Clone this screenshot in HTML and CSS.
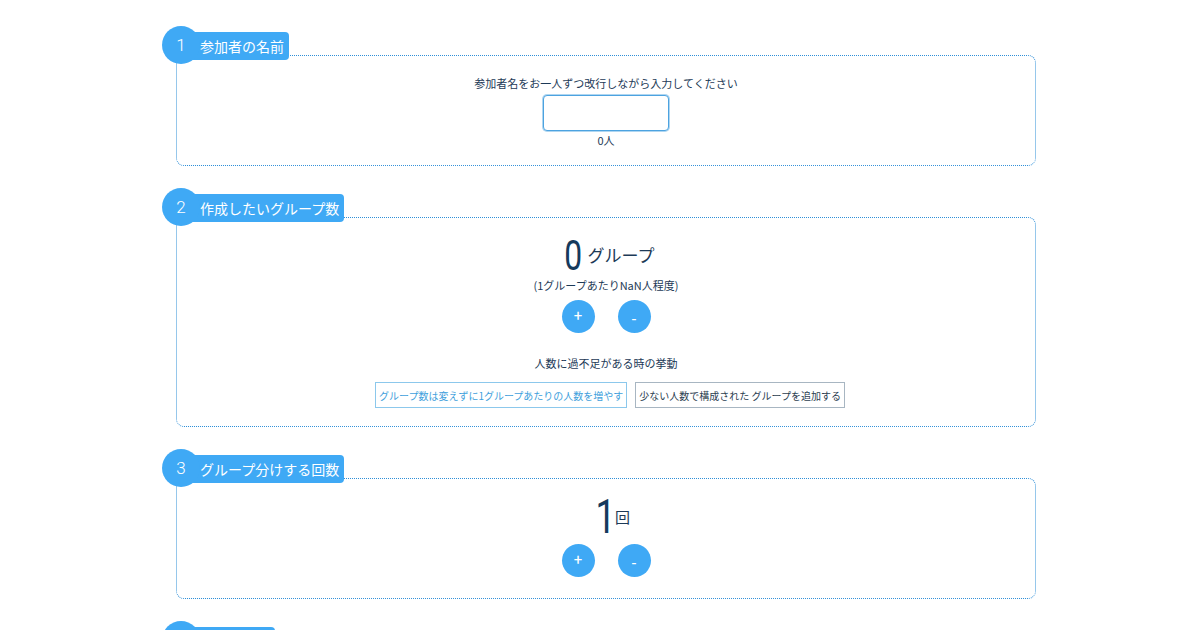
FILE: index.html
```html
<!DOCTYPE html>
<html lang="ja">
<head>
<meta charset="utf-8">
<title>グループ分け</title>
<link rel="stylesheet" href="styles.css">
</head>
<body>
<main class="wrap">
  <section class="section">
    <div class="heading"><span class="num">1</span><span class="label">参加者の名前</span></div>
    <div class="box box-names">
      <p class="hint">参加者名をお一人ずつ改行しながら入力してください</p>
      <textarea class="names"></textarea>
      <p class="count">0人</p>
    </div>
  </section>

  <section class="section">
    <div class="heading"><span class="num">2</span><span class="label">作成したいグループ数</span></div>
    <div class="box box-groups">
      <div class="big-row"><span class="big big-zero">0</span><span class="unit">グループ</span></div>
      <p class="sub">(1グループあたりNaN人程度)</p>
      <div class="steppers"><button class="step">+</button><button class="step minus">-</button></div>
      <p class="hint behavior">人数に過不足がある時の挙動</p>
      <div class="options">
        <button class="opt active">グループ数は変えずに1グループあたりの人数を増やす</button>
        <button class="opt">少ない人数で構成された グループを追加する</button>
      </div>
    </div>
  </section>

  <section class="section">
    <div class="heading"><span class="num">3</span><span class="label">グループ分けする回数</span></div>
    <div class="box box-rounds">
      <div class="big-row round-row"><span class="big big-one">1</span><span class="unit unit-small">回</span></div>
      <div class="steppers"><button class="step">+</button><button class="step minus">-</button></div>
    </div>
  </section>

  <section class="section">
    <div class="heading"><span class="num">4</span><span class="label">結果を見る</span></div>
    <div class="box box-last"></div>
  </section>
</main>
</body>
</html>
```

FILE: styles.css
```css
html { overflow: hidden; }
body {
  margin: 0;
  padding-top: 26px;
  font-family: "Noto Sans CJK JP", "Noto Sans", sans-serif;
  font-weight: 400;
  color: #1d3a57;
  background: #fff;
}
.wrap {
  width: 874px;
  margin: 0 auto 0 162px;
}
.section { margin-bottom: 22px; }
.heading {
  position: relative;
  z-index: 2;
  display: flex;
  align-items: center;
  height: 38px;
}
.num {
  position: relative;
  z-index: 2;
  width: 38px;
  height: 38px;
  border-radius: 50%;
  background: #3fa9f5;
  color: #fff;
  font-family: "Roboto", sans-serif;
  font-weight: 300;
  font-size: 17px;
  line-height: 38px;
  text-align: center;
}
.label {
  margin-left: -10px;
  height: 28px;
  padding: 0 5px 0 10px;
  background: #3fa9f5;
  color: #fff;
  font-size: 14px;
  line-height: 28px;
  border-radius: 0 4px 4px 0;
  margin-top: 2px;
}
.box {
  position: relative;
  z-index: 1;
  margin: -9px 0 0 14px;
  border: 1px dotted #2f8fd8;
  border-radius: 8px;
  display: flex;
  flex-direction: column;
  align-items: center;
}
.box-names { padding: 18px 0 16px; }
.hint {
  margin: 0;
  font-size: 11px;
  line-height: 18px;
}
.names {
  box-sizing: border-box;
  width: 126px;
  height: 36px;
  margin-top: 3px;
  border: 1px solid #4da3e0;
  box-shadow: 0 0 0 1px rgba(77,163,224,.45);
  border-radius: 4px;
  resize: none;
  outline: none;
}
.count {
  margin: 0;
  font-size: 11px;
  line-height: 18px;
}
.box-groups { padding: 18px 0 18px; }
.big-row {
  display: flex;
  align-items: center;
  height: 38px;
  padding-left: 4px;
}
.big {
  display: inline-block;
  font-family: "Roboto", sans-serif;
  font-weight: 400;
  color: #153a5c;
  transform: scaleX(0.74);
  transform-origin: center;
}
.big-zero { font-size: 43px; line-height: 38px; margin-right: 0; }
.unit { font-size: 17px; line-height: 38px; margin-left: 2px; }
.sub {
  margin: 0;
  font-size: 11px;
  line-height: 18px;
  margin-top: 2px;
}
.steppers {
  display: flex;
  gap: 23px;
  margin-top: 6px;
}
.step {
  width: 33px;
  height: 33px;
  padding: 0;
  border: none;
  border-radius: 50%;
  background: #3fa9f5;
  color: #fff;
  font-family: "Roboto", sans-serif;
  font-size: 15px;
  line-height: 33px;
}
.minus { font-size: 16px; line-height: 40px; }
.behavior { margin-top: 21px; }
.options {
  display: flex;
  gap: 8px;
  margin-top: 10px;
  margin-left: 8px;
}
.opt {
  height: 26px;
  padding: 0 3px;
  background: #fff;
  border: 1px solid #a8b6c2;
  color: #2b3d50;
  font-family: "Noto Sans CJK JP", sans-serif;
  font-weight: 400;
  font-size: 10px;
}
.opt.active {
  border-color: #8cc8ec;
  color: #3f9fdc;
}
.box-rounds { padding: 17px 0 21px; }
.round-row { height: 42px; padding-left: 10px; }
.big-one { font-size: 48px; line-height: 42px; margin-right: -4px; }
.unit-small { font-size: 15px; margin-left: 0; }
.box-last { height: 120px; }
```
